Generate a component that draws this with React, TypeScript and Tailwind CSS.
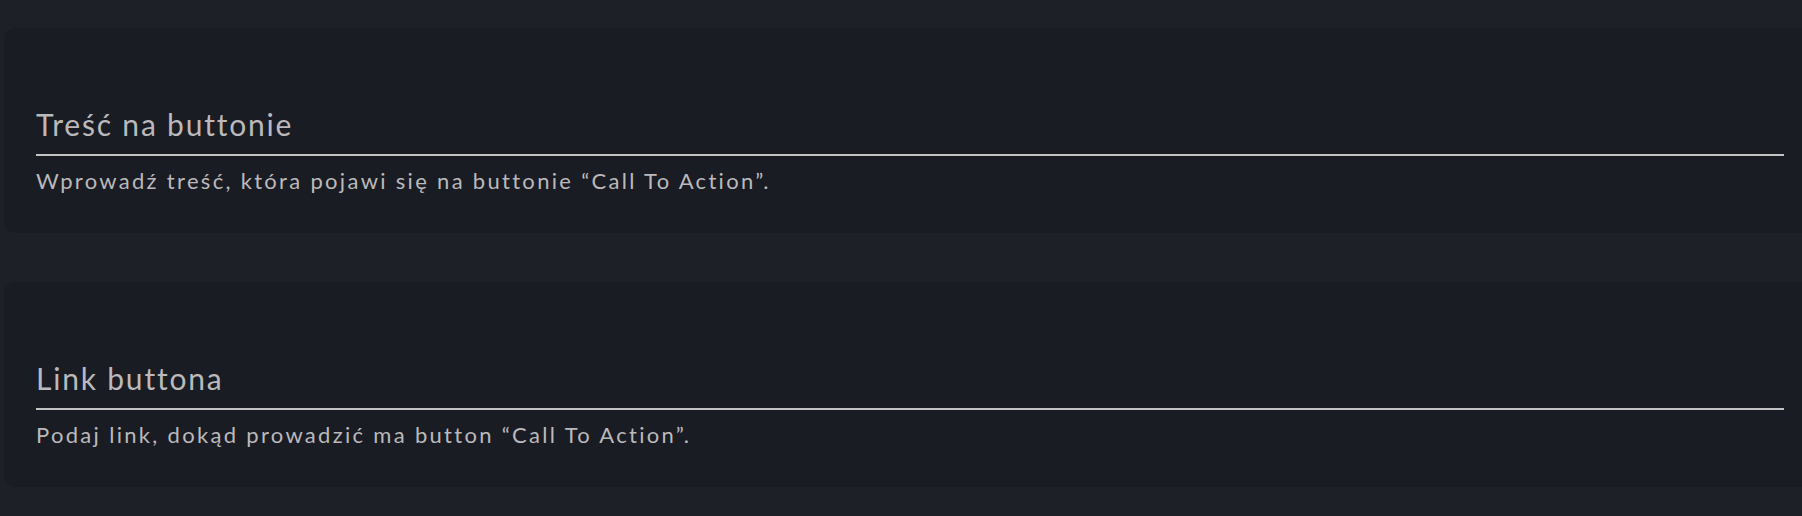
const fields = [
  {
    label: "Treść na buttonie",
    hint: "Wprowadź treść, która pojawi się na buttonie “Call To Action”.",
  },
  {
    label: "Link buttona",
    hint: "Podaj link, dokąd prowadzić ma button “Call To Action”.",
  },
];

export default function App() {
  return (
    <div
      className="flex h-[516px] w-full flex-col gap-[49px] overflow-hidden bg-[#1e2028] pl-[4px] pt-[28px]"
      style={{ fontFamily: "Lato, 'Open Sans', sans-serif" }}
    >
      {fields.map((f) => (
        <div
          key={f.label}
          className="-mr-[20px] flex h-[205px] flex-col rounded-[12px] bg-[#1a1c23] pl-[32px] pr-[38px] pt-[78px]"
        >
          <label className="text-[30px] leading-[36px] tracking-[0.06em] text-[#bbb9bb]">
            {f.label}
          </label>
          <div className="mt-[12px] h-[2px] w-full bg-[#c4c3c4]" />
          <p className="mt-[11px] text-[22px] leading-[28px] tracking-[0.105em] text-[#bbb9bb]">
            {f.hint}
          </p>
        </div>
      ))}
    </div>
  );
}
